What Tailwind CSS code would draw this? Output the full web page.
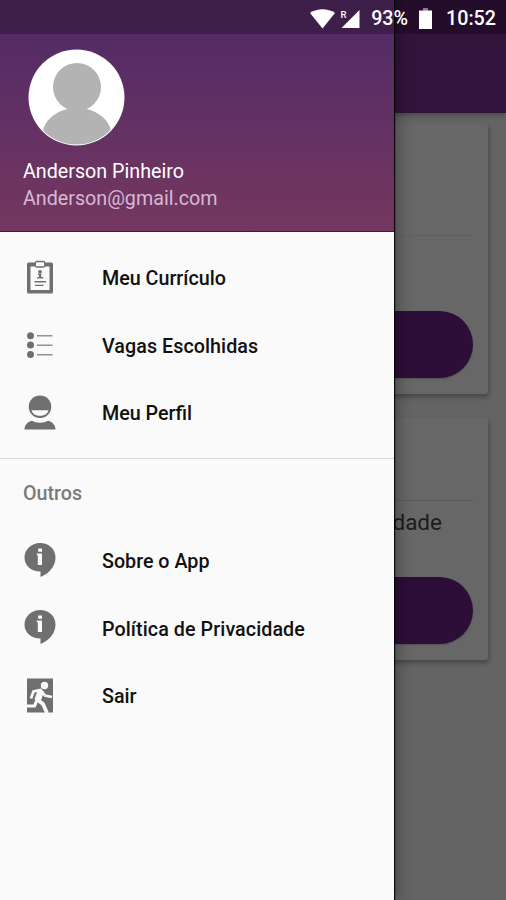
<!DOCTYPE html>
<html lang="pt-br">
<head>
    <meta charset="UTF-8">
    <meta name="viewport" content="width=device-width, initial-scale=1.0">
    <title>Menu</title>
    <script src="https://cdn.jsdelivr.net/npm/@tailwindcss/browser@4"></script>
    <style>
        body {
            font-family: Roboto, 'Noto Sans', sans-serif;
        }
    </style>
</head>
<body class="bg-[#646464]">

    <div class="relative w-[506px] h-[900px] overflow-hidden bg-[#646464]">

        <!-- Tela de fundo -->
        <header class="h-[113px] bg-[#32133c] shadow-[0_2px_5px_rgba(0,0,0,0.3)]"></header>
        <main class="pl-[18px] pr-[18px] pt-[10px] flex flex-col gap-6">
            <section class="h-[271px] rounded-[3px] bg-[#676767] shadow-[1px_3px_5px_rgba(0,0,0,0.3)] pl-[15px] pr-[15px] flex flex-col">
                <div class="h-[113px] border-b border-[#606060]"></div>
                <div class="h-[75px]"></div>
                <div class="h-[67px] rounded-full bg-[#2d0e38] shadow-[0_1px_2px_rgba(0,0,0,0.2)]"></div>
            </section>
            <section class="h-[242px] rounded-[3px] bg-[#676767] shadow-[1px_3px_5px_rgba(0,0,0,0.3)] pl-[15px] pr-[15px] flex flex-col">
                <div class="h-[83px] border-b border-[#5a5a5a]"></div>
                <div class="h-[76px] pt-[6px] pr-[31px] text-right text-[22.5px] leading-[30px] text-[#1c1c1c]">dade</div>
                <div class="h-[67px] rounded-full bg-[#2d0e38] shadow-[0_1px_2px_rgba(0,0,0,0.2)]"></div>
            </section>
        </main>

        <!-- Menu lateral -->
        <aside class="absolute top-0 left-0 w-[394px] h-[900px] bg-[#fafafa] text-[#111] shadow-[1px_0_1px_rgba(0,0,0,0.9),4px_0_14px_rgba(0,0,0,0.3)]">
            <div class="h-[232px] pt-[49px] pl-[23px] bg-linear-to-b from-[#542b66] from-15% to-[#75375f] border-b border-[#5c1038]">
                <svg class="ml-[5px] size-[97px]" viewBox="0 0 97 97">
                    <defs>
                        <clipPath id="avatar"><circle cx="48.500" cy="48.500" r="47"/></clipPath>
                    </defs>
                    <circle cx="48.500" cy="48.500" r="48" fill="#fff"/>
                    <g clip-path="url(#avatar)" fill="#b3b3b3">
                        <circle cx="49" cy="38" r="24"/>
                        <path d="M39 56h20v4c11 3 19 9 23 18l4 19H12l4-19c4-9 12-15 23-18z"/>
                    </g>
                </svg>
                <p class="mt-[12px] text-[19.7px] leading-[27px] text-white">Anderson Pinheiro</p>
                <p class="text-[19.7px] leading-[27px] text-[#d7b9d3]">Anderson@gmail.com</p>
            </div>

            <nav class="text-[19.7px]">
                <ul class="pt-[12px] pb-[11.500px] border-b border-[#d9d9d9] font-medium">
                    <li class="flex items-center h-[67.500px] pl-[23px] gap-[45px]">
                        <svg class="size-[34px] overflow-visible" viewBox="0 0 34 34">
                            <rect x="4" y="1.500" width="26" height="31" rx="1.500" fill="#6f6f6f"/>
                            <path d="M7.500 5.500h19v23.500h-19z" fill="#fafafa"/>
                            <rect x="12.300" y="0.500" width="9.500" height="5.500" rx="1.500" fill="#fafafa" stroke="#6f6f6f" stroke-width="1.300"/>
                            <circle cx="17" cy="10.800" r="1.900" fill="#6f6f6f"/>
                            <path d="M15 12.800h3.200v3.300h2v1.300h-6v-1.300h1.800v-2h-1zM11.500 20h11.500v1.400H11.500zM12 23.700h8.500v1.400H12z" fill="#6f6f6f"/>
                        </svg>
                        <span class="mt-[2px]">Meu Currículo</span>
                    </li>
                    <li class="flex items-center h-[67.500px] pl-[23px] gap-[45px]">
                        <svg class="size-[34px]" viewBox="0 0 34 34" fill="#6f6f6f">
                            <circle cx="7.500" cy="7.800" r="3.500"/>
                            <circle cx="7.500" cy="17.100" r="3.500"/>
                            <circle cx="7.500" cy="26.500" r="3.500"/>
                            <path d="M14 7h15.500v1.500H14zM14 16.400h15.500v1.500H14zM14 25.900h15.500v1.500H14z" opacity="0.75"/>
                        </svg>
                        <span class="mt-[3px] tracking-[0.06px]">Vagas Escolhidas</span>
                    </li>
                    <li class="flex items-center h-[67.500px] pl-[23px] gap-[45px]">
                        <svg class="size-[34px] overflow-visible" viewBox="0 0 34 34" fill="#6f6f6f">
                            <circle cx="17" cy="10.800" r="11.300"/>
                            <path d="M8.500 14.200h17c-1 3.700-4.500 5.600-8.500 5.600s-7.500-1.900-8.500-5.600z" fill="#fafafa"/>
                            <path d="M1.500 33.500c0-4 2.500-7.500 7.500-8.800 2 1.300 5 2 8 2s6-.7 8-2c5 1.300 7.500 4.800 7.500 8.800z"/>
                        </svg>
                        <span class="mt-[2px]">Meu Perfil</span>
                    </li>
                </ul>

                <h2 class="flex items-center h-[68px] pt-[2px] pl-[23px] font-medium text-[#7a7a7a]">Outros</h2>
                <ul class="font-medium">
                    <li class="flex items-center h-[67.500px] pl-[23px] gap-[45px]">
                        <svg class="size-[34px] overflow-visible" viewBox="0 0 34 34" fill="#6f6f6f">
                            <path d="M17-1C8.500-1 1.500 5.500 1.500 13.500S8 27.500 17.500 27.500v5.500C26 29.500 32.500 22.500 32.500 13.500S25.500-1 17-1z"/>
                            <path d="M15.200 4.500h3.800v3.200h-3.800zM13.800 9.500h5.200v11.500h-4.200v-9.700h-1z" fill="#fafafa"/>
                        </svg>
                        <span class="mt-[2px]">Sobre o App</span>
                    </li>
                    <li class="flex items-center h-[67.500px] pl-[23px] gap-[45px]">
                        <svg class="size-[34px] overflow-visible" viewBox="0 0 34 34" fill="#6f6f6f">
                            <path d="M17-1C8.500-1 1.500 5.500 1.500 13.500S8 27.500 17.500 27.500v5.500C26 29.500 32.500 22.500 32.500 13.500S25.500-1 17-1z"/>
                            <path d="M15.200 4.500h3.800v3.200h-3.800zM13.800 9.500h5.200v11.500h-4.200v-9.700h-1z" fill="#fafafa"/>
                        </svg>
                        <span class="mt-[3px] tracking-[0.08px]">Política de Privacidade</span>
                    </li>
                    <li class="flex items-center h-[67.500px] pl-[23px] gap-[45px]">
                        <svg class="size-[34px] overflow-visible" viewBox="0 0 34 34">
                            <path d="M4-.5h26v34H4z" fill="#6f6f6f"/>
                            <circle cx="21.500" cy="6.500" r="3.700" fill="#fafafa"/>
                            <g fill="none" stroke="#fafafa">
                                <path d="M8 19.500l2.500-7 7-1.500 4.500 5.500 7 1.500" stroke-width="2.700"/>
                                <path d="M18 11.500l-3.500 10" stroke-width="6.500"/>
                                <path d="M14 20.500l6 4.500 4 9" stroke-width="3.800"/>
                                <path d="M14 21l-2.500 6H3" stroke-width="3.200"/>
                            </g>
                        </svg>
                        <span class="mt-[2px]">Sair</span>
                    </li>
                </ul>
            </nav>
        </aside>

        <!-- Barra de status -->
        <div class="absolute top-0 left-0 w-[506px] h-[34px] bg-black/27 flex items-center justify-end pr-[10px] pt-[3px] text-white text-[19.7px] font-medium">
            <svg class="w-[25px] h-[20px]" viewBox="0 0 25 20">
                <path d="M0 4C7-1 18-1 25 4L12.500 19.500z" fill="#fff"/>
            </svg>
            <svg class="ml-[5px] w-[20px] h-[20px]" viewBox="0 0 20 20">
                <path d="M19.500 1v18H1.500z" fill="#fff"/>
                <path d="M0 0h9v10H0z" fill="#3f2049"/>
                <text x="0.500" y="8.500" font-size="9.500" font-weight="500" fill="#fff">R</text>
            </svg>
            <span class="ml-[11px]">93%</span>
            <svg class="ml-[11px] w-[13px] h-[22px]" viewBox="0 0 13 22">
                <path d="M4 0h5v3H4z" fill="#8c7993"/>
                <path d="M0 2.500h13V21H0z" fill="#fff"/>
            </svg>
            <span class="ml-[14px]">10:52</span>
        </div>
    </div>

</body>
</html>
